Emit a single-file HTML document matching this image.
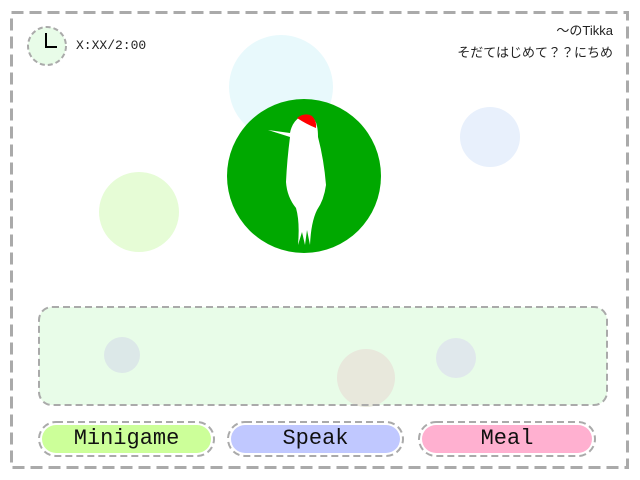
<!DOCTYPE html>
<html><head><meta charset="utf-8"><style>
html,body{margin:0;padding:0;background:#fff;width:640px;height:480px;overflow:hidden;font-family:"Liberation Sans","Noto Sans CJK JP",sans-serif}
.a{position:absolute}
.c{position:absolute;border-radius:50%}
.btn{position:absolute;top:425px;height:28px;border-radius:14px;text-align:center;font:22px/28px "Liberation Mono","DejaVu Sans Mono",monospace;color:#111}
</style></head><body>
<div class="c" style="left:229px;top:35px;width:104px;height:104px;background:#e8f9fc"></div>
<div class="c" style="left:460px;top:107px;width:60px;height:60px;background:#e8f0fc"></div>
<div class="c" style="left:99px;top:172px;width:80px;height:80px;background:#e6fcd6"></div>
<div class="a" style="left:39px;top:307px;width:568px;height:98px;border-radius:13px;background:#e8fce8;overflow:hidden">
<div class="c" style="left:65px;top:30px;width:36px;height:36px;background:#dce8e8"></div>
<div class="c" style="left:397px;top:31px;width:40px;height:40px;background:#e0e8ec"></div>
<div class="c" style="left:298px;top:42px;width:58px;height:58px;background:#e8e8dc"></div>
</div>
<div class="c" style="left:337px;top:349px;width:58px;height:58px;background:#e8e8dc;clip-path:inset(56px 0 0 0)"></div>
<div class="c" style="left:227px;top:99px;width:154px;height:154px;background:#00a800"></div>
<div class="c" style="left:28px;top:27px;width:38px;height:38px;background:#e8fce8"></div>
<div class="btn" style="left:42px;width:169px;background:#ccff99">Minigame</div>
<div class="btn" style="left:231px;width:169px;background:#c0c8ff">Speak</div>
<div class="btn" style="left:422px;width:170px;background:#ffb0d0">Meal</div>
<svg class="a" style="left:0;top:0" width="640" height="480" fill="none" stroke="#aaa">
<rect x="11.5" y="12.5" width="616" height="455" stroke-width="3" stroke-dasharray="12 6"/>
<rect x="39" y="307" width="568" height="98" rx="13" stroke-width="2" stroke-dasharray="7 4"/>
<circle cx="47" cy="46" r="19" stroke-width="2" stroke-dasharray="5 3"/>
<rect x="39" y="422" width="175" height="34" rx="17" stroke-width="2" stroke-dasharray="7 4"/>
<rect x="228" y="422" width="175" height="34" rx="17" stroke-width="2" stroke-dasharray="7 4"/>
<rect x="419" y="422" width="176" height="34" rx="17" stroke-width="2" stroke-dasharray="7 4"/>
<path d="M268,130 L290,133 Q292,122 300,117 L314,119 Q318,124 318,137 Q324,160 326,185 Q324,200 317,210 Q311,222 310,245 L307,230 L305,245 L302,232 L298,245 Q300,222 296,208 Q287,197 286,182 Q287,160 290,137 Z" fill="#fff" stroke="none"/>
<path d="M297,118 Q305,112 312,116 Q317,121 316,128 Q306,124 297,118 Z" fill="#f00" stroke="none"/>
</svg>
<div class="a" style="left:45px;top:33px;width:2px;height:14px;background:#000"></div>
<div class="a" style="left:45px;top:46px;width:12px;height:2px;background:#000"></div>
<div class="a" style="left:76px;top:38px;font:13px 'Liberation Mono','DejaVu Sans Mono',monospace;color:#222">X:XX/2:00</div>
<div class="a" style="right:27px;top:20px;font-size:13px;color:#222;text-align:right;line-height:22px">～のTikka<br>そだてはじめて？？にちめ</div>
</body></html>
